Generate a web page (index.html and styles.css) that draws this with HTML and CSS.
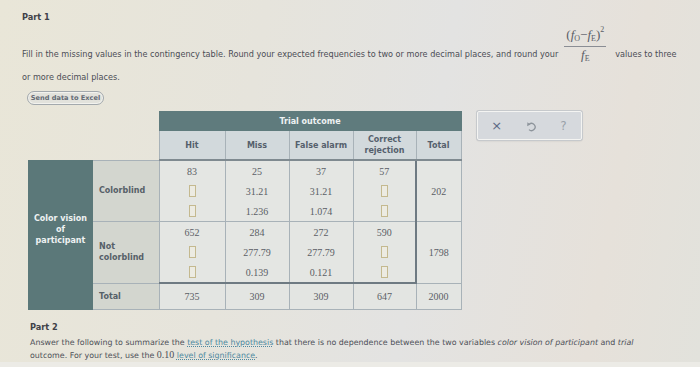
FILE: index.html
```html
<!DOCTYPE html>
<html>
<head>
<meta charset="utf-8">
<link rel="stylesheet" href="styles.css">
</head>
<body>
<div class="page">
  <div class="part-title">Part 1</div>
  <div class="instr-line">
    <span class="instr-text">Fill in the missing values in the contingency table. Round your expected frequencies to two or more decimal places, and round your</span>
    <span class="frac">
      <span class="num">(<i>f</i><sub>O</sub>−<i>f</i><sub>E</sub>)<sup>2</sup></span>
      <span class="den"><i>f</i><sub>E</sub></span>
    </span>
    <span class="instr-text">values to three</span>
  </div>
  <div class="instr-line2">or more decimal places.</div>
  <div class="btn">Send data to Excel</div>

  <div class="work">
    <table class="ct">
      <tr class="h1">
        <th class="blank"></th>
        <th class="blank"></th>
        <th class="dark" colspan="5">Trial outcome</th>
      </tr>
      <tr class="h2">
        <th class="blank"></th>
        <th class="blank"></th>
        <th>Hit</th>
        <th>Miss</th>
        <th>False alarm</th>
        <th>Correct<br>rejection</th>
        <th>Total</th>
      </tr>
      <tr class="r">
        <th class="rowhead" rowspan="7">Color vision<br>of<br>participant</th>
        <th class="lab" rowspan="3">Colorblind</th>
        <td class="dv">83</td><td class="dv">25</td><td class="dv">37</td><td class="dv cr">57</td>
        <td class="tot" rowspan="3">202</td>
      </tr>
      <tr class="r">
        <td class="dv"><span class="inp"></span></td><td class="dv">31.21</td><td class="dv">31.21</td><td class="dv cr"><span class="inp"></span></td>
      </tr>
      <tr class="r">
        <td class="dv bb"><span class="inp"></span></td><td class="dv bb">1.236</td><td class="dv bb">1.074</td><td class="dv cr bb"><span class="inp"></span></td>
      </tr>
      <tr class="r">
        <th class="lab" rowspan="3">Not<br>colorblind</th>
        <td class="dv">652</td><td class="dv">284</td><td class="dv">272</td><td class="dv cr">590</td>
        <td class="tot" rowspan="3">1798</td>
      </tr>
      <tr class="r">
        <td class="dv"><span class="inp"></span></td><td class="dv">277.79</td><td class="dv">277.79</td><td class="dv cr"><span class="inp"></span></td>
      </tr>
      <tr class="r">
        <td class="dv last"><span class="inp"></span></td><td class="dv last">0.139</td><td class="dv last">0.121</td><td class="dv cr last"><span class="inp"></span></td>
      </tr>
      <tr class="rt">
        <th class="lab">Total</th>
        <td>735</td><td>309</td><td>309</td><td>647</td><td>2000</td>
      </tr>
    </table>

    <div class="toolbar">
      <span class="tb-x">×</span>
      <svg class="tb-undo" width="11" height="12" viewBox="0 0 11 12">
        <path d="M3.2 4.2 A3.6 3.6 0 1 1 3 9.6" fill="none" stroke="#8d949b" stroke-width="1.3"/>
        <path d="M1.4 2.2 L4.4 4.6 L1.2 6.2 Z" fill="#8d949b"/>
      </svg>
      <span class="tb-q">?</span>
    </div>
  </div>

  <div class="part2">
    <div class="part-title">Part 2</div>
    <p class="p2">Answer the following to summarize the <a class="lnk">test of the hypothesis</a> that there is no dependence between the two variables <i>color vision of participant</i> and <i>trial</i><br>outcome. For your test, use the <span class="serif">0.10</span> <a class="lnk">level of significance</a>.</p>
  </div>
</div>
<div class="footer-strip"></div>
</body>
</html>
```

FILE: styles.css
```css
html, body {
  margin: 0;
  padding: 0;
}
body {
  width: 700px;
  height: 367px;
  overflow: hidden;
  font-family: "DejaVu Sans", Verdana, sans-serif;
  color: #4b4d55;
  background: linear-gradient(100deg, #e9e6d8 0%, #e6e4dc 35%, #e3e3e2 60%, #e6e1da 85%, #e2e2dc 100%);
  position: relative;
}
.page {
  padding: 12px 0 0 22px;
}
.part-title {
  font-size: 8.2px;
  font-weight: bold;
  line-height: 10px;
  color: #3f4148;
}
.instr-line {
  display: flex;
  align-items: flex-end;
  margin-top: 11px;
  height: 34px;
  font-size: 8.15px;
  white-space: nowrap;
}
.instr-text {
  line-height: 10px;
  margin-bottom: 8px;
}
.frac {
  display: inline-flex;
  flex-direction: column;
  align-items: center;
  margin: 0 9px 0 6px;
  font-family: "Liberation Serif", "Times New Roman", serif;
  color: #5a5d66;
}
.frac .num {
  font-size: 13px;
  line-height: 15px;
  padding: 0 2px 0;
  border-bottom: 1px solid #8a8d94;
}
.frac .den {
  font-size: 13px;
  line-height: 16px;
}
.frac sub {
  font-size: 8px;
  vertical-align: -2px;
}
.frac sup {
  font-size: 8px;
  vertical-align: 7px;
}
.instr-line2 {
  margin-top: 5px;
  font-size: 8.15px;
  line-height: 10px;
}
.btn {
  margin: 9px 0 0 5px;
  width: 75px;
  height: 12px;
  border: 1px solid #a3a9ad;
  border-radius: 8px;
  background: #e2e2dc;
  font-size: 6.6px;
  font-weight: bold;
  line-height: 12px;
  text-align: center;
  color: #646b74;
  box-shadow: inset 0 0 0 1px #f2f2ee;
}
.work {
  display: flex;
  align-items: flex-start;
  margin: 6px 0 0 6px;
}
.ct {
  border-collapse: collapse;
  table-layout: fixed;
  font-size: 8px;
}
.ct th, .ct td {
  padding: 0;
  text-align: center;
}
.ct .blank {
  background: transparent;
  border: none;
}
.h1 th.dark {
  height: 18px;
  background: #5f7b7d;
  color: #eef2f2;
  font-weight: bold;
  border: 1px solid #5f7b7d;
}
.h1 th:nth-child(1) { width: 64px; }
.h1 th:nth-child(2) { width: 66px; }
.h2 th {
  height: 28px;
  background: #d2d9dc;
  color: #55606c;
  font-weight: bold;
  border-left: 1px solid #a8b2b8;
  border-right: 1px solid #a8b2b8;
  border-bottom: 2px solid #7f8a90;
  line-height: 11px;
}
.h2 th.blank { border: none; }
.h2 th:nth-child(3) { width: 65px; }
.h2 th:nth-child(4) { width: 63px; }
.h2 th:nth-child(5) { width: 63px; }
.h2 th:nth-child(6) { width: 62px; }
.h2 th:nth-child(7) { width: 44px; }
.rowhead {
  background: #5b7879;
  color: #eef2f2;
  font-weight: bold;
  line-height: 11px;
  text-align: center;
  vertical-align: middle;
  border: 1px solid #5b7879;
  padding-bottom: 10px !important;
}
.lab {
  background: #d3d6cf;
  color: #566068;
  font-weight: bold;
  text-align: left !important;
  padding-left: 6px !important;
  line-height: 11px;
  border: 1px solid #a8b2b8;
}
.r td, .rt td {
  font-family: "Liberation Serif", "Times New Roman", serif;
  font-size: 10px;
  color: #5b5e66;
  background: #e4e6e3;
}
.r td {
  height: 20px;
}
.dv {
  border-left: 1px solid #a8b2b8;
  border-right: 1px solid #a8b2b8;
}
.dv.cr {
  border-right: 2px solid #6e7a82;
}
.dv.bb {
  border-bottom: 1px solid #a8b2b8;
}
.dv.last {
  border-bottom: 2px solid #6e7a82;
}
.tot {
  border: 1px solid #a8b2b8;
}
.rt td, .rt th {
  height: 25px;
  border: 1px solid #a8b2b8;
}
.rt td {
  background: #e3e5e2;
}
.inp {
  display: inline-block;
  width: 5px;
  height: 10px;
  border: 1px solid #c4b98f;
  vertical-align: middle;
  background: #ecebe2;
}
.toolbar {
  margin-left: 15px;
  width: 105px;
  height: 29px;
  border: 1px solid #f4f4f2;
  border-radius: 2px;
  background: #d6d9dd;
  box-shadow: 0 0 0 1px #c6c9cc, 0 1px 2px rgba(0,0,0,0.15);
  display: flex;
  align-items: center;
  justify-content: space-around;
  padding: 0 2px;
  box-sizing: border-box;
}
.tb-x {
  font-size: 13px;
  color: #5c6b86;
  line-height: 12px;
}
.tb-q {
  font-size: 12px;
  color: #9aa2a9;
  line-height: 12px;
}
.part2 {
  margin: 12px 0 0 8px;
}
.p2 {
  margin: 5px 0 0;
  font-size: 7.9px;
  line-height: 12px;
  color: #4d5058;
}
.serif {
  font-family: "Liberation Serif", "Times New Roman", serif;
  font-size: 10px;
}
.lnk {
  color: #4f8aa1;
  text-decoration: underline dotted;
}
.footer-strip {
  position: absolute;
  left: 0;
  right: 0;
  bottom: 0;
  height: 5px;
  background: #ecebe6;
}
```
